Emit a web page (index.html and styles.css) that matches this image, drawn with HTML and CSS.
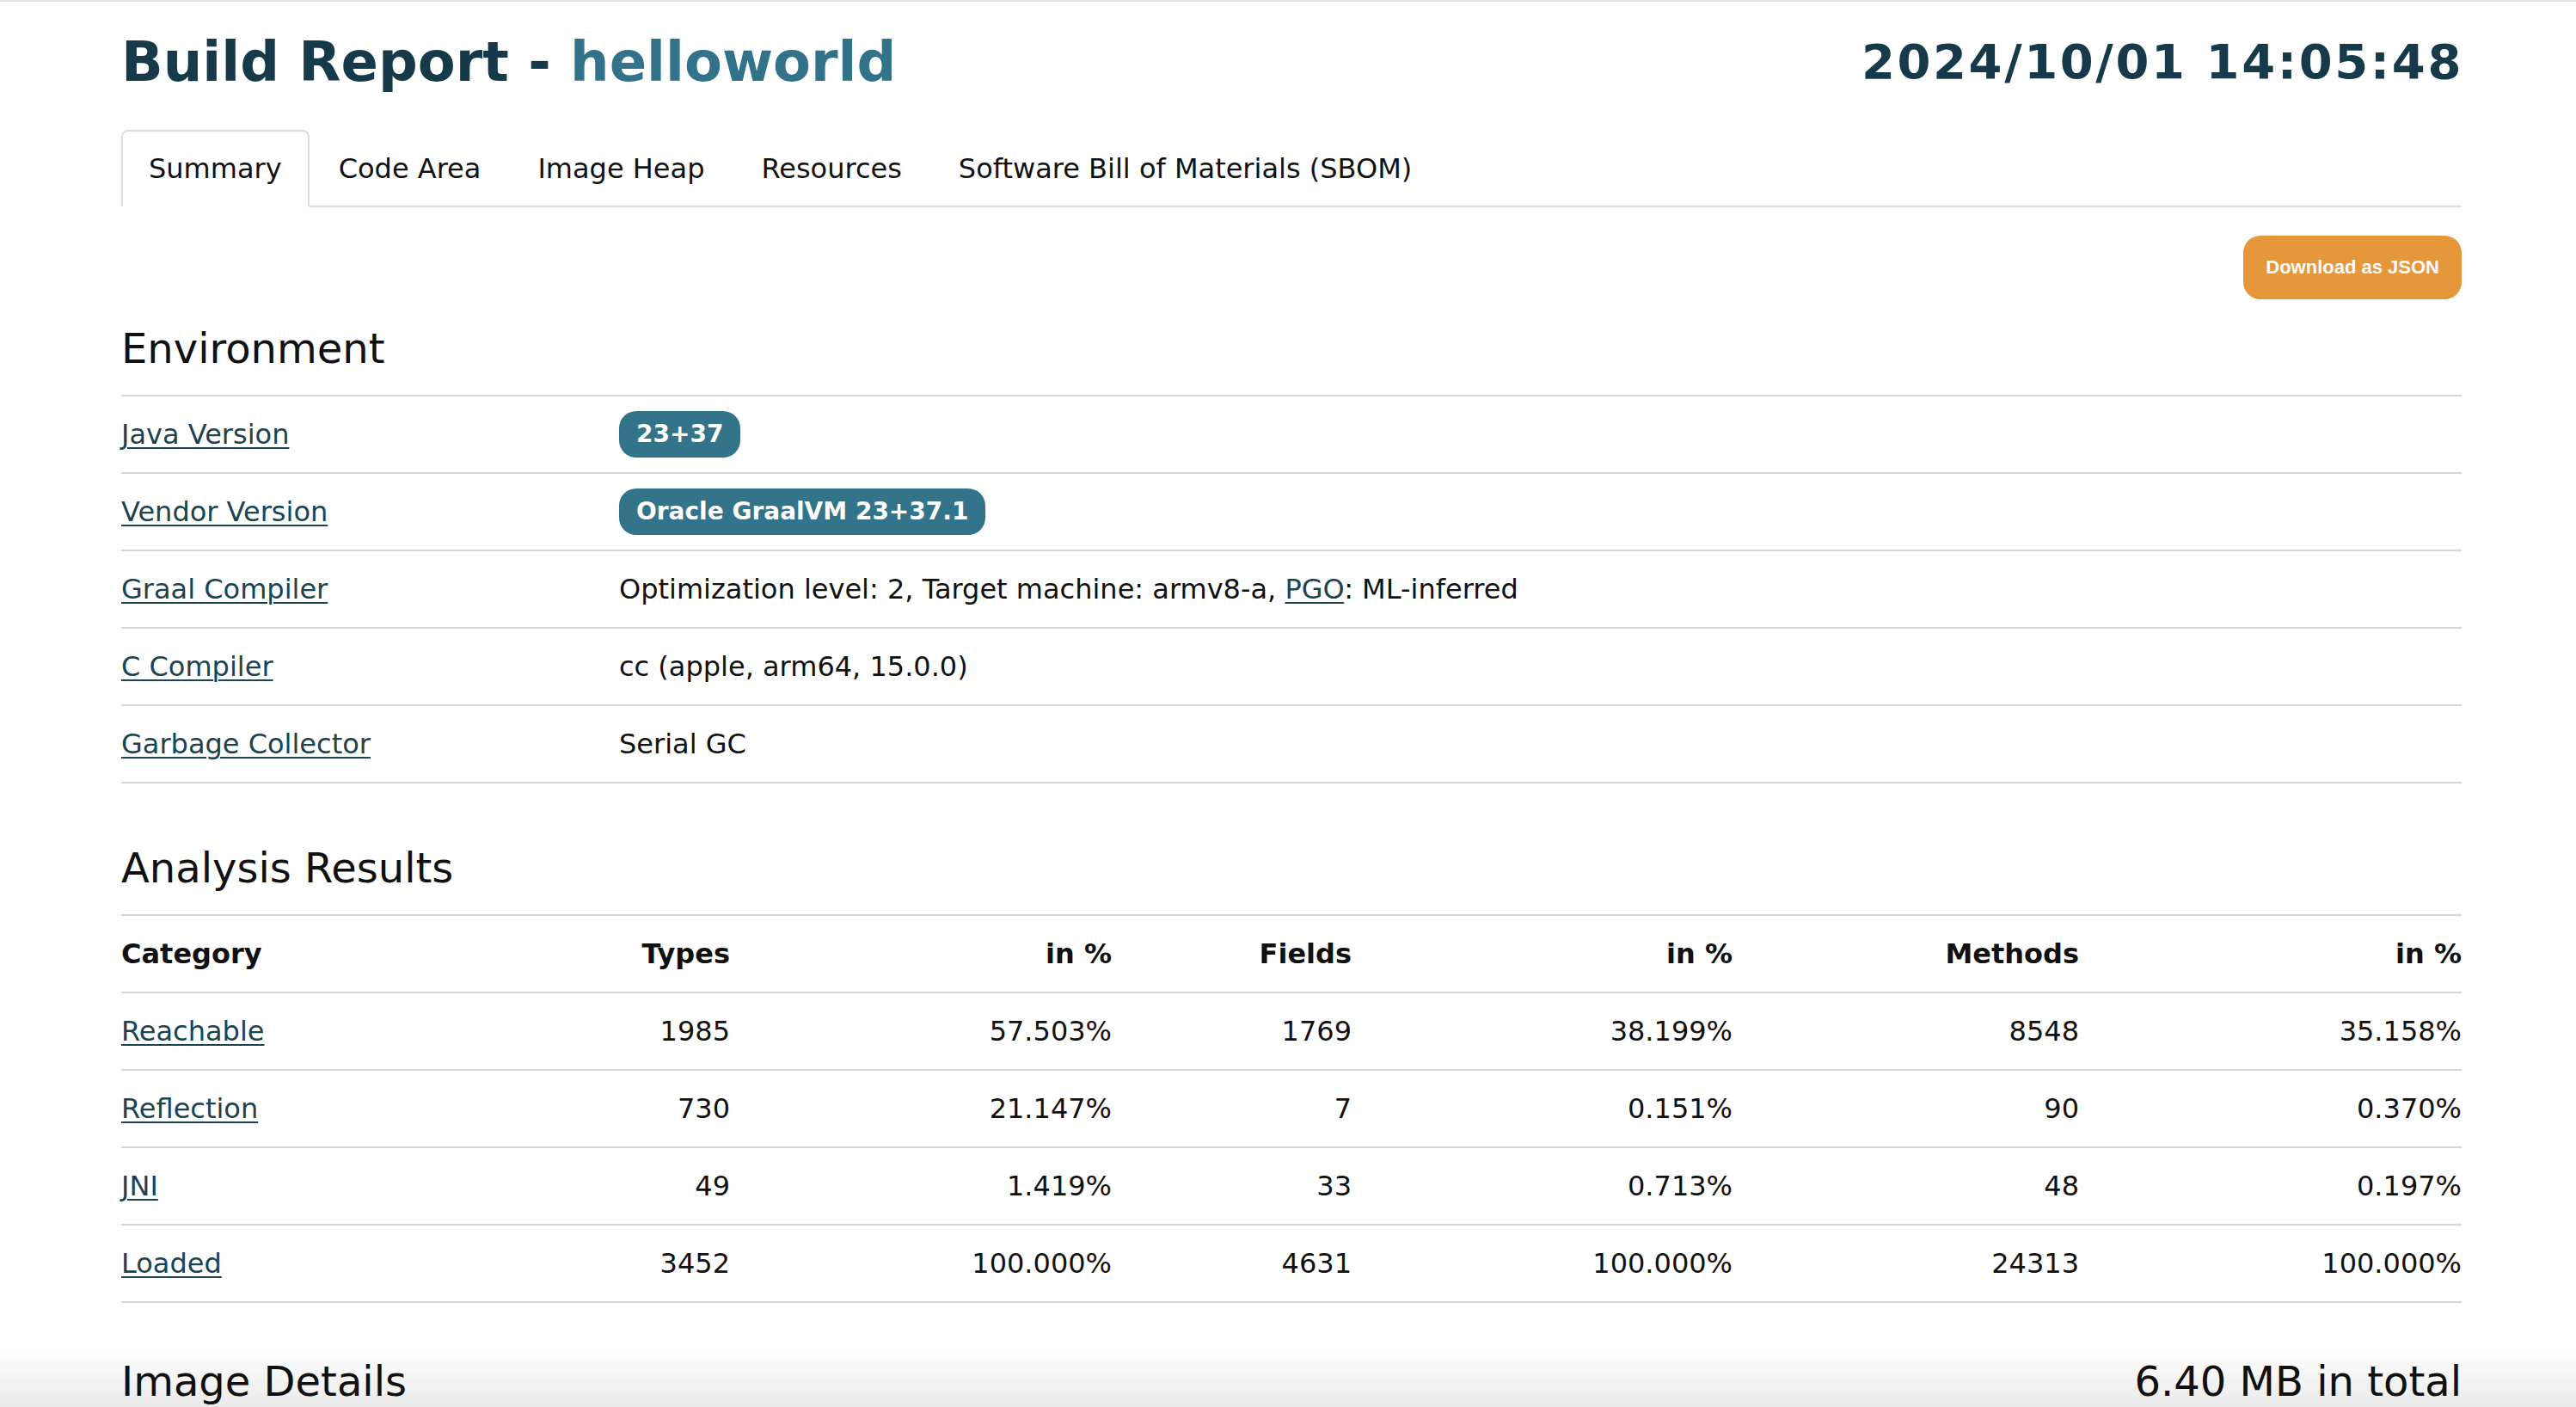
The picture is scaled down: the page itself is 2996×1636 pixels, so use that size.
FILE: index.html
```html
<!DOCTYPE html>
<html lang="en">
<head>
<meta charset="utf-8">
<title>Build Report - helloworld</title>
<link rel="stylesheet" href="styles.css">
</head>
<body>
<div class="page">
  <header class="header">
    <h1 class="title">Build Report - <span class="title-name">helloworld</span></h1>
    <div class="timestamp">2024/10/01 14:05:48</div>
  </header>

  <nav class="tabs">
    <a class="tab active" href="#summary">Summary</a>
    <a class="tab" href="#code-area">Code Area</a>
    <a class="tab" href="#image-heap">Image Heap</a>
    <a class="tab" href="#resources">Resources</a>
    <a class="tab" href="#sbom">Software Bill of Materials (SBOM)</a>
  </nav>

  <div class="actions">
    <button class="download" type="button">Download as JSON</button>
  </div>

  <section class="section section-env">
    <h2 class="section-title">Environment</h2>
    <table class="kv-table">
      <colgroup><col class="kv-key"><col class="kv-val"></colgroup>
      <tbody>
        <tr><td><a class="link" href="#">Java Version</a></td><td class="badge-cell"><span class="badge">23+37</span></td></tr>
        <tr><td><a class="link" href="#">Vendor Version</a></td><td class="badge-cell"><span class="badge">Oracle GraalVM 23+37.1</span></td></tr>
        <tr><td><a class="link" href="#">Graal Compiler</a></td><td>Optimization level: 2, Target machine: armv8-a, <a class="link" href="#">PGO</a>: ML-inferred</td></tr>
        <tr><td><a class="link" href="#">C Compiler</a></td><td>cc (apple, arm64, 15.0.0)</td></tr>
        <tr><td><a class="link" href="#">Garbage Collector</a></td><td>Serial GC</td></tr>
      </tbody>
    </table>
  </section>

  <section class="section section-analysis">
    <h2 class="section-title">Analysis Results</h2>
    <table class="data-table">
      <colgroup>
        <col class="c-cat"><col class="c-types"><col class="c-pct1"><col class="c-fields"><col class="c-pct2"><col class="c-methods"><col class="c-pct3">
      </colgroup>
      <thead>
        <tr><th class="left">Category</th><th>Types</th><th>in %</th><th>Fields</th><th>in %</th><th>Methods</th><th>in %</th></tr>
      </thead>
      <tbody>
        <tr><td class="left"><a class="link" href="#">Reachable</a></td><td>1985</td><td>57.503%</td><td>1769</td><td>38.199%</td><td>8548</td><td>35.158%</td></tr>
        <tr><td class="left"><a class="link" href="#">Reflection</a></td><td>730</td><td>21.147%</td><td>7</td><td>0.151%</td><td>90</td><td>0.370%</td></tr>
        <tr><td class="left"><a class="link" href="#">JNI</a></td><td>49</td><td>1.419%</td><td>33</td><td>0.713%</td><td>48</td><td>0.197%</td></tr>
        <tr><td class="left"><a class="link" href="#">Loaded</a></td><td>3452</td><td>100.000%</td><td>4631</td><td>100.000%</td><td>24313</td><td>100.000%</td></tr>
      </tbody>
    </table>
  </section>

  <section class="section section-image">
    <div class="section-head">
      <h2 class="section-title">Image Details</h2>
      <span class="section-total">6.40 MB in total</span>
    </div>
  </section>
</div>
<div class="bottom-shade"></div>
</body>
</html>
```

FILE: styles.css
```css
html, body {
  margin: 0;
  padding: 0;
  background: #ffffff;
}

body {
  border-top: 2px solid #e2e2e2;
  font-family: "DejaVu Sans", Verdana, sans-serif;
  font-size: 32px;
  color: #111111;
}

.page {
  margin-left: 141px;
  width: 2722px;
  padding-top: 32px;
  padding-bottom: 200px;
}

.header {
  display: flex;
  justify-content: space-between;
  align-items: flex-start;
}

.title {
  margin: 0;
  font-size: 64px;
  line-height: 76px;
  font-weight: bold;
  color: #173a4a;
}

.title-name {
  color: #32738a;
}

.timestamp {
  font-size: 56px;
  line-height: 76px;
  font-weight: bold;
  letter-spacing: 2.6px;
  margin-right: -2px;
  color: #173a4a;
}

.tabs {
  display: flex;
  margin-top: 41px;
  border-bottom: 2px solid #dddddd;
}

.tab {
  padding: 20px 30px;
  line-height: 46px;
  border: 2px solid transparent;
  border-radius: 8px 8px 0 0;
  margin-right: 2px;
  margin-bottom: -2px;
  color: #111111;
  text-decoration: none;
}

.tab.active {
  border-color: #dddddd;
  border-bottom-color: #ffffff;
  background: #ffffff;
}

.actions {
  display: flex;
  justify-content: flex-end;
  margin-top: 33px;
}

.download {
  font-family: "Liberation Sans", Arial, sans-serif;
  font-size: 22px;
  font-weight: bold;
  line-height: 26px;
  padding: 24px 26px;
  color: #ffffff;
  background: #e5973a;
  border: none;
  border-radius: 20px;
}

.section-env {
  margin-top: 29px;
}

.section-analysis {
  margin-top: 70px;
}

.section-image {
  margin-top: 63px;
}

.section-title {
  margin: 0 0 26px 0;
  font-size: 48px;
  line-height: 56px;
  font-weight: normal;
  color: #111111;
}

.section-head {
  display: flex;
  justify-content: space-between;
  align-items: flex-start;
}

.section-total {
  font-size: 48px;
  line-height: 56px;
}

.link {
  color: #1b4352;
  text-decoration: underline;
  text-decoration-thickness: 2px;
  text-underline-offset: 4px;
}

table {
  width: 100%;
  border-collapse: separate;
  border-spacing: 0;
  table-layout: fixed;
  border-bottom: 2px solid #d6d6d6;
}

td, th {
  border-top: 2px solid #d6d6d6;
  padding: 20px 0;
  line-height: 48px;
  vertical-align: middle;
  white-space: nowrap;
}

.kv-key {
  width: 579px;
}

.kv-table td {
  text-align: left;
}

.kv-table td.badge-cell {
  padding: 17px 0;
  line-height: 54px;
}

.badge {
  display: inline-block;
  padding: 0 20px;
  height: 54px;
  line-height: 54px;
  font-size: 28px;
  font-weight: bold;
  color: #ffffff;
  background: #33748a;
  border-radius: 20px;
  vertical-align: top;
}

.c-cat { width: 420px; }
.c-types { width: 288px; }
.c-pct1 { width: 444px; }
.c-fields { width: 279px; }
.c-pct2 { width: 443px; }
.c-methods { width: 403px; }
.c-pct3 { width: 445px; }

.data-table th,
.data-table td {
  text-align: right;
}

.data-table th {
  font-weight: bold;
}

.data-table .left {
  text-align: left;
}

.bottom-shade {
  position: fixed;
  left: 0;
  right: 0;
  bottom: 0;
  height: 72px;
  pointer-events: none;
  background: linear-gradient(to bottom, rgba(0, 0, 0, 0), rgba(0, 0, 0, 0.08));
}
```
